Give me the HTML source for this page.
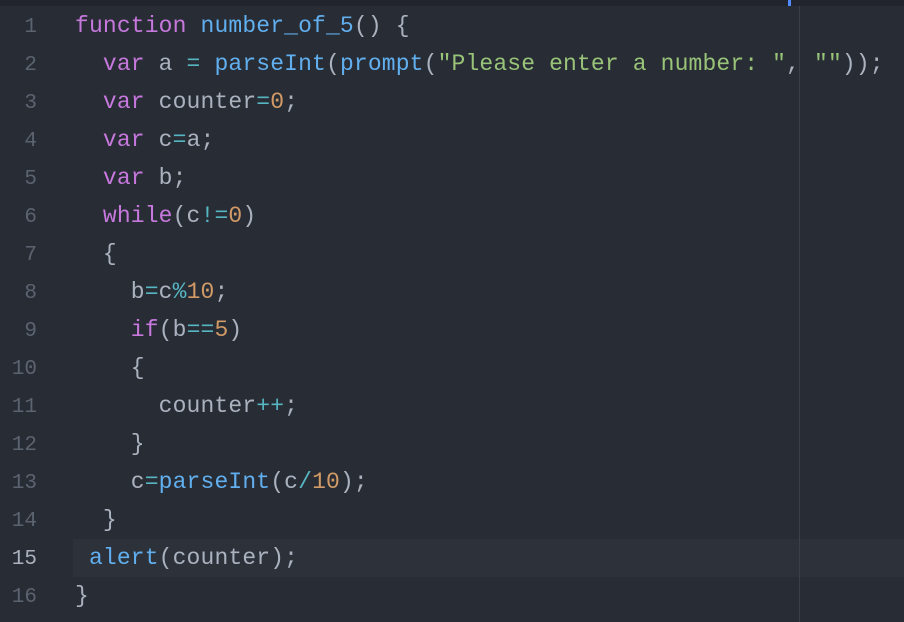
<!DOCTYPE html><html><head><style>
body{margin:0;width:904px;height:622px;background:#282c34;overflow:hidden;position:relative;font-family:"Liberation Mono",monospace;font-size:23px}
.top{position:absolute;left:0;top:0;width:904px;height:6px;background:#21252b}
.mark{position:absolute;left:788px;top:0;width:3px;height:6px;background:#528bff}
.vl{position:absolute;left:799px;top:6px;width:1px;height:616px;background:#3b4048}
.hl{position:absolute;left:73px;top:539px;width:831px;height:38px;background:#2c313a}
.l{position:absolute;left:0;height:38px;line-height:38px;white-space:pre;color:#abb2bf}
.n{display:inline-block;width:37px;text-align:right;color:#5c6370;font-size:21px}
.c{position:absolute;left:75px;top:0;letter-spacing:0.14px}
.k{color:#c678dd}.f{color:#61afef}.o{color:#56b6c2}.d{color:#d19a66}.s{color:#98c379}
</style></head><body>
<div class="top"></div><div class="mark"></div><div class="hl"></div><div class="vl"></div>
<div class="l" style="top:7px"><span class="n">1</span><span class="c"><span class="k">function</span> <span class="f">number_of_5</span>() {</span></div>
<div class="l" style="top:45px"><span class="n">2</span><span class="c">  <span class="k">var</span> a <span class="o">=</span> <span class="f">parseInt</span>(<span class="f">prompt</span>(<span class="s">"Please enter a number: "</span>, <span class="s">""</span>));</span></div>
<div class="l" style="top:83px"><span class="n">3</span><span class="c">  <span class="k">var</span> counter<span class="o">=</span><span class="d">0</span>;</span></div>
<div class="l" style="top:121px"><span class="n">4</span><span class="c">  <span class="k">var</span> c<span class="o">=</span>a;</span></div>
<div class="l" style="top:159px"><span class="n">5</span><span class="c">  <span class="k">var</span> b;</span></div>
<div class="l" style="top:197px"><span class="n">6</span><span class="c">  <span class="k">while</span>(c<span class="o">!=</span><span class="d">0</span>)</span></div>
<div class="l" style="top:235px"><span class="n">7</span><span class="c">  {</span></div>
<div class="l" style="top:273px"><span class="n">8</span><span class="c">    b<span class="o">=</span>c<span class="o">%</span><span class="d">10</span>;</span></div>
<div class="l" style="top:311px"><span class="n">9</span><span class="c">    <span class="k">if</span>(b<span class="o">==</span><span class="d">5</span>)</span></div>
<div class="l" style="top:349px"><span class="n">10</span><span class="c">    {</span></div>
<div class="l" style="top:387px"><span class="n">11</span><span class="c">      counter<span class="o">++</span>;</span></div>
<div class="l" style="top:425px"><span class="n">12</span><span class="c">    }</span></div>
<div class="l" style="top:463px"><span class="n">13</span><span class="c">    c<span class="o">=</span><span class="f">parseInt</span>(c<span class="o">/</span><span class="d">10</span>);</span></div>
<div class="l" style="top:501px"><span class="n">14</span><span class="c">  }</span></div>
<div class="l" style="top:539px"><span class="n" style="color:#abb2bf">15</span><span class="c"> <span class="f">alert</span>(counter);</span></div>
<div class="l" style="top:577px"><span class="n">16</span><span class="c">}</span></div>
</body></html>
